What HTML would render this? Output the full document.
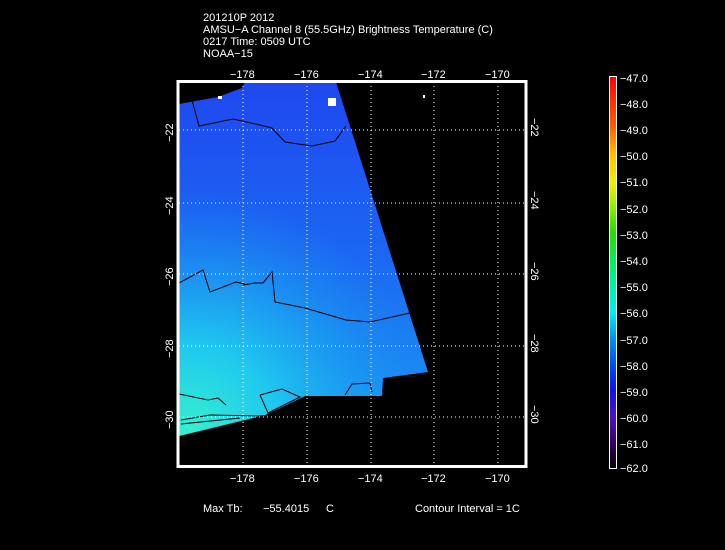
<!DOCTYPE html>
<html><head><style>
html,body{margin:0;padding:0;background:#000;width:725px;height:550px;overflow:hidden}
svg{display:block}
text{font-family:"Liberation Sans",sans-serif;fill:#fff;font-size:11px}
</style></head><body>
<svg width="725" height="550" viewBox="0 0 725 550">
<defs>
<linearGradient id="g" gradientUnits="userSpaceOnUse" x1="0" y1="82" x2="0" y2="436">
<stop offset="0" stop-color="#1e48f0"/>
<stop offset="0.5" stop-color="#1c68f2"/>
<stop offset="1" stop-color="#1a9af2"/>
</linearGradient>
<radialGradient id="r" gradientUnits="userSpaceOnUse" cx="190" cy="430" r="240">
<stop offset="0" stop-color="#34f0d0" stop-opacity="1"/>
<stop offset="0.35" stop-color="#20d0ee" stop-opacity="0.9"/>
<stop offset="0.7" stop-color="#1aa8f2" stop-opacity="0.5"/>
<stop offset="1" stop-color="#1a90f2" stop-opacity="0"/>
</radialGradient>
<linearGradient id="cb" x1="0" y1="0" x2="0" y2="1">
<stop offset="0" stop-color="#ff0000"/>
<stop offset="0.13" stop-color="#ff6000"/>
<stop offset="0.2" stop-color="#ffc000"/>
<stop offset="0.27" stop-color="#f0f000"/>
<stop offset="0.33" stop-color="#90f000"/>
<stop offset="0.4" stop-color="#20e000"/>
<stop offset="0.5" stop-color="#00f080"/>
<stop offset="0.6" stop-color="#00f0f0"/>
<stop offset="0.67" stop-color="#0090f0"/>
<stop offset="0.75" stop-color="#0040f0"/>
<stop offset="0.8" stop-color="#1010f0"/>
<stop offset="0.87" stop-color="#5010c0"/>
<stop offset="0.94" stop-color="#300060"/>
<stop offset="1" stop-color="#000000"/>
</linearGradient>
</defs>
<text x="203" y="21">201210P 2012</text>
<text x="203" y="33">AMSU−A Channel 8 (55.5GHz) Brightness Temperature (C)</text>
<text x="203" y="45">0217 Time: 0509 UTC</text>
<text x="203" y="57">NOAA−15</text>

<polygon points="179,104 218,97 242,88 245,82 336,82 428,372 383,378 382,396 305,396 265,415 179,436" fill="url(#g)"/>
<polygon points="179,104 218,97 242,88 245,82 336,82 428,372 383,378 382,396 305,396 265,415 179,436" fill="url(#r)"/>
<g fill="none" stroke="#000" stroke-width="1">
<polyline points="192,100 199,126 233,119 260,125 272,128 285,142 312,146 335,141 346,126"/>
<polyline points="179,283 203,270 210,292 236,282 245,284"/>
<polyline points="243,285 255,283 263,283 272,272 275,302 305,308 346,320 370,322 410,313"/>
<polyline points="179,394 208,400 218,398 226,405"/>
<polyline points="260,395 268,413 300,397 282,389 260,395"/>
<polyline points="181,420 210,415 260,416 280,414"/>
<polyline points="181,424 240,418"/>
<polyline points="345,395 352,384 370,383 372,392"/>
</g>
<g fill="#fff"><rect x="218" y="96" width="4" height="3"/><rect x="328" y="98" width="8" height="8"/><rect x="423" y="95" width="2" height="3"/></g>

<g stroke="#fff" stroke-width="1" stroke-dasharray="1,3">
<line x1="243" y1="82" x2="243" y2="466"/><line x1="307" y1="82" x2="307" y2="466"/>
<line x1="371" y1="82" x2="371" y2="466"/><line x1="434" y1="82" x2="434" y2="466"/>
<line x1="498" y1="82" x2="498" y2="466"/>
<line x1="179" y1="130" x2="526" y2="130"/><line x1="179" y1="203" x2="526" y2="203"/>
<line x1="179" y1="274" x2="526" y2="274"/><line x1="179" y1="346" x2="526" y2="346"/>
<line x1="179" y1="417" x2="526" y2="417"/>
</g>
<rect x="178" y="81.5" width="348" height="385" fill="none" stroke="#fff" stroke-width="3"/>
<g font-size="11">
<text x="230" y="78">−178</text><text x="294" y="78">−176</text><text x="358" y="78">−174</text><text x="421" y="78">−172</text><text x="485" y="78">−170</text>
<text x="230" y="482">−178</text><text x="294" y="482">−176</text><text x="358" y="482">−174</text><text x="421" y="482">−172</text><text x="485" y="482">−170</text>
</g>
<g font-size="11">
<text transform="translate(173,142) rotate(-90)">−22</text>
<text transform="translate(173,215) rotate(-90)">−24</text>
<text transform="translate(173,286) rotate(-90)">−26</text>
<text transform="translate(173,358) rotate(-90)">−28</text>
<text transform="translate(173,429) rotate(-90)">−30</text>
<text transform="translate(531,118) rotate(90)">−22</text>
<text transform="translate(531,191) rotate(90)">−24</text>
<text transform="translate(531,262) rotate(90)">−26</text>
<text transform="translate(531,334) rotate(90)">−28</text>
<text transform="translate(531,405) rotate(90)">−30</text>
</g>

<rect x="609.5" y="76.5" width="7" height="392" fill="url(#cb)" stroke="#fff" stroke-width="1"/>
<g font-size="11">
<text x="620" y="82">−47.0</text><text x="620" y="108">−48.0</text><text x="620" y="134">−49.0</text>
<text x="620" y="160">−50.0</text><text x="620" y="186">−51.0</text><text x="620" y="213">−52.0</text>
<text x="620" y="239">−53.0</text><text x="620" y="265">−54.0</text><text x="620" y="291">−55.0</text>
<text x="620" y="317">−56.0</text><text x="620" y="344">−57.0</text><text x="620" y="370">−58.0</text>
<text x="620" y="396">−59.0</text><text x="620" y="422">−60.0</text><text x="620" y="448">−61.0</text>
<text x="620" y="472">−62.0</text>
</g>
<text x="203" y="512">Max Tb:</text>
<text x="263" y="512">−55.4015</text>
<text x="326" y="512">C</text>
<text x="415" y="512">Contour Interval = 1C</text>
</svg>
</body></html>
